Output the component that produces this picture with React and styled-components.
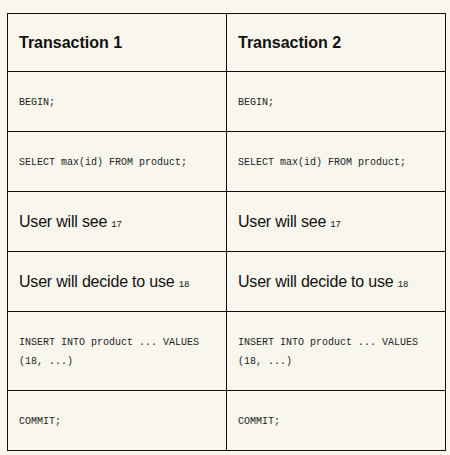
import React from "react";
import styled, { createGlobalStyle } from "styled-components";

const Global = createGlobalStyle`
  html, body { margin: 0; padding: 0; background: #f9f7ed; }
  body { font-family: "Liberation Sans", Arial, sans-serif; color: #111; }
`;

const Page = styled.div`
  padding: 13px 4px 4px 7px;
`;

const Table = styled.table`
  border-collapse: collapse;
  width: 439px;
  table-layout: fixed;
`;

const Cell = styled.td`
  border: 1px solid #111;
  padding: 0 10px 0 11px;
  height: ${(p) => p.$h}px;
  vertical-align: middle;
  box-sizing: border-box;
`;

const Head = styled(Cell).attrs({ as: "th" })`
  text-align: left;
  font-weight: bold;
  font-size: 16px;
`;

const Code = styled.code`
  font-family: "Liberation Mono", "Courier New", monospace;
  font-size: 10px;
  line-height: 19px;
  display: block;
  font-weight: normal;
  padding-top: 2px;
  color: #222;
`;

const Text = styled.span`
  font-size: 16px;
  letter-spacing: -0.2px;
`;

const Num = styled.code`
  font-family: "Liberation Mono", "Courier New", monospace;
  font-size: 9px;
`;

const rows = [
  { h: 60, kind: "code", v: "BEGIN;" },
  { h: 60, kind: "code", v: "SELECT max(id) FROM product;" },
  { h: 60, kind: "text", v: "User will see ", n: "17" },
  { h: 60, kind: "text", v: "User will decide to use ", n: "18" },
  { h: 79, kind: "code", v: "INSERT INTO product ... VALUES (18, ...)" },
  { h: 60, kind: "code", v: "COMMIT;" },
];

function Content({ r }) {
  if (r.kind === "code") return <Code>{r.v}</Code>;
  return (
    <Text>
      {r.v}
      <Num>{r.n}</Num>
    </Text>
  );
}

export default function App() {
  return (
    <>
      <Global />
      <Page>
        <Table>
          <thead>
            <tr>
              <Head $h={58}>Transaction 1</Head>
              <Head $h={58}>Transaction 2</Head>
            </tr>
          </thead>
          <tbody>
            {rows.map((r, i) => (
              <tr key={i}>
                <Cell $h={r.h}><Content r={r} /></Cell>
                <Cell $h={r.h}><Content r={r} /></Cell>
              </tr>
            ))}
          </tbody>
        </Table>
      </Page>
    </>
  );
}
